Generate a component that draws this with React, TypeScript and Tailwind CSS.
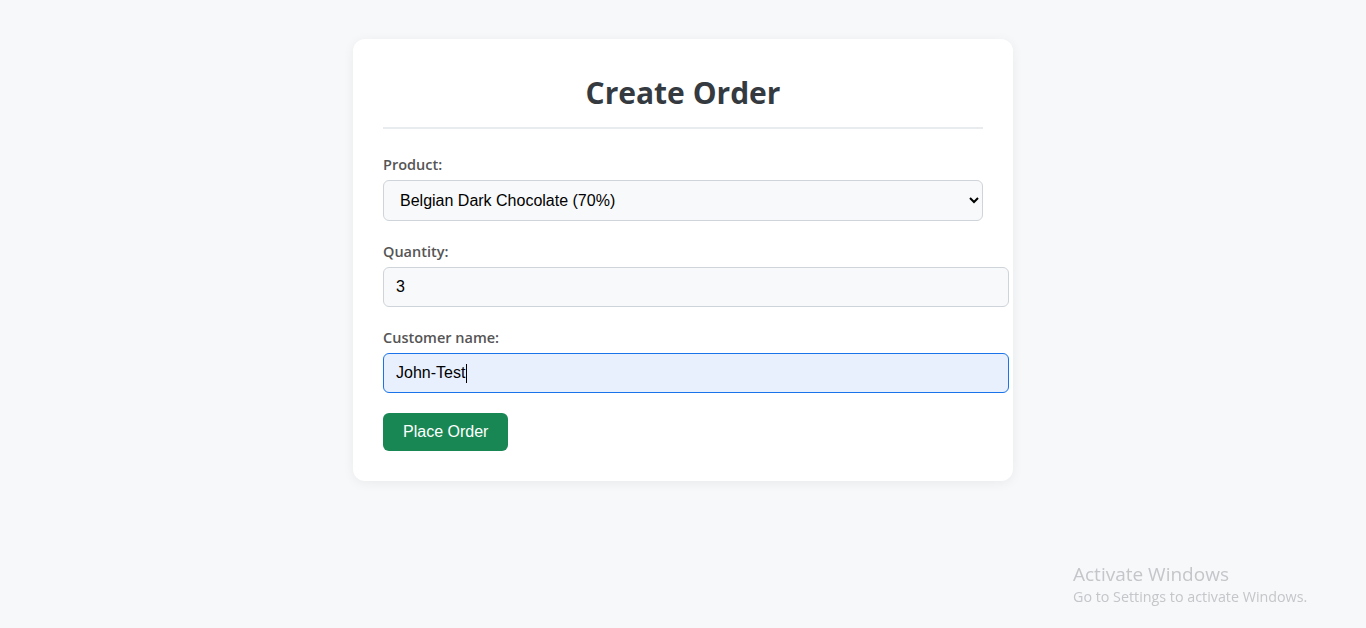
import { useState } from "react";

const products = [
  "Belgian Dark Chocolate (70%)",
  "Milk Chocolate Truffles",
  "White Chocolate Bar",
];

export default function App() {
  const [product, setProduct] = useState(products[0]);
  const [quantity, setQuantity] = useState("3");
  const [customer, setCustomer] = useState("John-Test");

  return (
    <div className="min-h-screen bg-[#f7f8fa] pt-[39px] font-['Open_Sans','Noto_Sans',sans-serif]">
      <div className="mx-auto w-[660px] rounded-xl bg-white p-[30px] shadow-[0_2px_12px_rgba(0,0,0,0.06)]">
        <h2 className="mb-[25px] border-b-2 border-[#e9ecef] pb-[14px] pt-[4px] text-center text-[30px] font-bold leading-[40px] text-[#343a40]">
          Create Order
        </h2>

        <div className="mb-5">
          <label className="mb-[5px] block text-[14.5px] font-semibold leading-[21px] text-[#555]">Product:</label>
          <select
            value={product}
            onChange={(e) => setProduct(e.target.value)}
            className="h-[41px] w-full rounded-md border border-[#ced4da] bg-[#f8f9fa] px-3 font-['Liberation_Sans',Arial,sans-serif] text-[16px] text-black"
          >
            {products.map((p) => (
              <option key={p}>{p}</option>
            ))}
          </select>
        </div>

        <div className="mb-5">
          <label className="mb-[5px] block text-[14.5px] font-semibold leading-[21px] text-[#555]">Quantity:</label>
          <input
            type="number"
            value={quantity}
            onChange={(e) => setQuantity(e.target.value)}
            className="box-content block h-[18px] w-full rounded-md border border-[#ced4da] bg-[#f8f9fa] px-3 py-[10px] font-['Liberation_Sans',Arial,sans-serif] text-[16px] leading-[18px] text-black outline-none [appearance:textfield] [&::-webkit-inner-spin-button]:appearance-none"
          />
        </div>

        <div className="mb-5">
          <label className="mb-[5px] block text-[14.5px] font-semibold leading-[21px] text-[#555]">Customer name:</label>
          <div className="relative">
            <input
              type="text"
              value={customer}
              onChange={(e) => setCustomer(e.target.value)}
              className="box-content block h-[18px] w-full rounded-md border border-[#1a73e8] bg-[#e8f0fe] px-3 py-[10px] font-['Liberation_Sans',Arial,sans-serif] text-[16px] leading-[18px] text-black outline-none"
            />
            {/* text caret */}
            <span className="pointer-events-none absolute left-[83px] top-[11px] h-[19px] w-px bg-black" />
          </div>
        </div>

        <button className="h-[38px] rounded-md bg-[#198754] px-5 font-['Liberation_Sans',Arial,sans-serif] text-[16px] leading-[18px] text-white">
          Place Order
        </button>
      </div>

      {/* windows watermark */}
      <div className="pointer-events-none fixed left-[1073px] top-[562px] font-['Open_Sans','Noto_Sans',sans-serif] text-[#c4c6c9]">
        <div className="text-[19px] leading-[24px]">Activate Windows</div>
        <div className="text-[14.3px] leading-[21px]">Go to Settings to activate Windows.</div>
      </div>
    </div>
  );
}
